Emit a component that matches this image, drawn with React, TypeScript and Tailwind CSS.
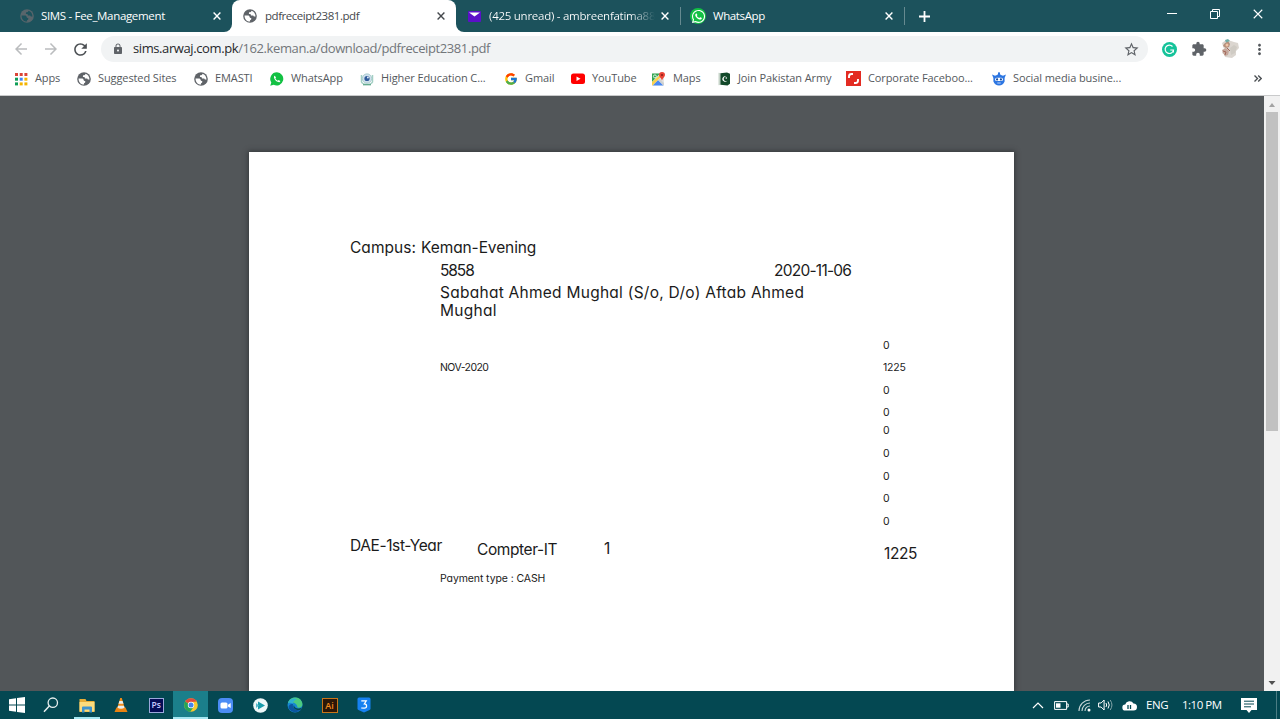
import React from "react";
import { MdLock, MdExtension, MdStarBorder, MdMoreVert, MdRefresh, MdArrowBack, MdArrowForward } from "react-icons/md";
import { FcGoogle } from "react-icons/fc";
import { FaWhatsapp } from "react-icons/fa";

function Globe({ color = "#5f6368", land = "#fff", size = 14 }: { color?: string; land?: string; size?: number }) {
  return (
    <svg width={size} height={size} viewBox="0 0 16 16" className="shrink-0">
      <circle cx="8" cy="8" r="7.8" fill={color} />
      <path d="M1.8 7.3h3.6c1.3 0 2.2.7 2.2 1.8 0 .9.8 1.2 1.8 1.2v1.1c0 .8-.5 1.3-1.3 1.3v1.7C4.600 14.500 1.600 11.600 1.800 7.300z" fill={land} />
      <path d="M9.600 2c0 .9-.5 1.600-1.400 1.600H6.900v1.200c0 .6-.4 1-1 1h1.500c1 0 1.700.6 1.700 1.500h1.800c.8 0 1.500.5 1.500 1.200h1.900C14.200 5.400 12.500 2.800 9.600 2z" fill={land} />
    </svg>
  );
}

function WhatsApp({ size = 14 }: { size?: number }) {
  return (
    <svg width={size} height={size} viewBox="0 0 16 16" className="shrink-0">
      <path d="M8 .3A7.600 7.600 0 0 0 1.500 12L.3 15.800l3.900-1.100A7.600 7.600 0 1 0 8 .3z" fill="#12c143" />
      <path d="M5.600 4.200c-.9.300-1.300 1.200-1 2.300.7 2.400 2.500 4.300 4.900 5 1.100.3 2.100-.2 2.300-1.300l-2-1.100-.9 1c-1.300-.5-2.200-1.400-2.800-2.600l.8-.9z" fill="#fff" />
    </svg>
  );
}

function AppsIcon() {
  const colors = ["#db4437", "#db4437", "#db4437", "#0f9d58", "#4285f4", "#f4b400", "#0f9d58", "#f4b400", "#f4b400"];
  return (
    <svg width="14" height="14" viewBox="0 0 14 14" className="shrink-0">
      {colors.map((c, i) => (
        <rect key={i} x={1 + (i % 3) * 4.700} y={1 + Math.floor(i / 3) * 4.700} width="3" height="3" fill={c} />
      ))}
    </svg>
  );
}

function HigherEd() {
  return (
    <svg width="14" height="14" viewBox="0 0 14 14" className="shrink-0">
      <path d="M1.500 3v7C3 13 11 13 12.500 10V3" fill="none" stroke="#a3cfc4" strokeWidth="1.500" />
      <circle cx="7" cy="6.500" r="4.700" fill="#cfe0ec" stroke="#8fbcba" strokeWidth=".6" />
      <circle cx="7" cy="6.500" r="2.600" fill="#2f5a9a" />
      <circle cx="7.900" cy="5.500" r=".9" fill="#e8f2fb" />
      <path d="M3 12.700h8" stroke="#61a98e" strokeWidth="1.300" />
    </svg>
  );
}

function YouTube() {
  return (
    <svg width="14" height="14" viewBox="0 0 14 14" className="shrink-0">
      <rect x="0" y="1.500" width="14" height="10.500" rx="2.500" fill="#f00" />
      <path d="M5.500 4.500v4.600l4-2.300z" fill="#fff" />
    </svg>
  );
}

function Maps() {
  return (
    <svg width="15" height="14" viewBox="0 0 15 14" className="shrink-0">
      <rect x="1" y="1.500" width="12" height="12" rx="1" fill="#e6e6e3" />
      <path d="M1 1.500h8L1 10z" fill="#34a853" />
      <path d="M1.500 13.500l5.500-5.500 5.500 5.500z" fill="#4a89f3" />
      <path d="M1 10l8-7 1 2-8.500 8.500H1z" fill="#fbd14b" />
      <path d="M7 8l1.500-1.500 4.500 4.500v2.500h-.5z" fill="#cfd1d1" />
      <circle cx="3.900" cy="4.400" r="1.500" fill="none" stroke="#fff" strokeWidth=".8" />
      <path d="M11 0a3 3 0 0 0-3 3c0 2 2.300 2.800 3 5.500.700-2.700 3-3.500 3-5.500a3 3 0 0 0-3-3z" fill="#ea4335" />
      <circle cx="11" cy="3" r="1.100" fill="#8c1f17" />
    </svg>
  );
}

function Army() {
  return (
    <svg width="14" height="14" viewBox="0 0 14 14" className="shrink-0">
      <path d="M1.500.8L4 1.200v11.500l-2.500.500z" fill="#c5d3c8" />
      <path d="M3.500 1.200L10 .5l3 1.300v10L10.500 13.500l-7-.8z" fill="#12492a" />
      <path d="M9.600 4.800a2.700 2.700 0 1 0 .8 3.700 2.200 2.200 0 1 1-.8-3.700z" fill="#fff" />
      <circle cx="9.300" cy="6" r=".8" fill="#fff" />
    </svg>
  );
}

function Corporate() {
  return (
    <svg width="15" height="15" viewBox="0 0 15 15" className="shrink-0">
      <rect width="15" height="15" fill="#e32b22" />
      <path d="M3 7V5.500Q3 3 5.500 3H7M8 12h1.500Q12 12 12 9.500V8" fill="none" stroke="#fff" strokeWidth="1.900" />
    </svg>
  );
}

function Social() {
  return (
    <svg width="14" height="14" viewBox="0 0 14 14" className="shrink-0">
      <path d="M0 2.500l3 1.200L5 3l1-.7V.8L7 0l1 .8v1.500L9 3l2 .7 3-1.200L12.600 6v3.500Q11 13.600 7 13.600T1.400 9.500V6z" fill="#2d76e2" />
      <rect x="3" y="5.700" width="8" height="3.400" rx="1.700" fill="#fff" />
      <circle cx="5.100" cy="7.400" r="1.100" fill="#174b9d" />
      <circle cx="8.900" cy="7.400" r="1.100" fill="#174b9d" />
      <path d="M5.300 11h3.400" stroke="#fff" strokeWidth=".7" />
    </svg>
  );
}

function Cross({ color = "#fff", size = 8, w = 1.400 }: { color?: string; size?: number; w?: number }) {
  return (
    <svg width={size} height={size} viewBox="0 0 8 8" className="shrink-0">
      <path d="M.6.6l6.800 6.800M7.400.6L.6 7.400" stroke={color} strokeWidth={w} />
    </svg>
  );
}

function TabStrip() {
  return (
    <div className="flex h-8 bg-[#1c525c] text-[11.5px] tracking-[-0.33px] text-white">
      <div className="flex bg-white">
        <div className="flex w-[232px] items-center rounded-br-lg bg-[#1c525c] pl-5">
          <Globe color="#58656b" land="#1c525c" />
          <span className="ml-[7px] w-[172px] whitespace-nowrap">SIMS - Fee_Management</span>
          <Cross />
        </div>
      </div>
      <div className="flex w-[224px] items-center rounded-t-lg bg-white pl-[11px] text-[#45494d]">
        <Globe />
        <span className="ml-2 w-[172px] whitespace-nowrap tracking-[-0.46px]">pdfreceipt2381.pdf</span>
        <Cross color="#45494d" />
      </div>
      <div className="flex bg-white">
        <div className="flex w-[224px] items-center rounded-bl-lg bg-[#1c525c] pl-3">
          <svg width="13" height="11" viewBox="0 0 13 11" className="shrink-0">
            <rect width="13" height="11" rx="1" fill="#5b10c8" />
            <path d="M1 1.500h11L6.500 5.500z" fill="#fff" />
          </svg>
          <span className="ml-2 w-[166px] whitespace-nowrap bg-linear-to-r from-white from-85% to-transparent bg-clip-text tracking-[-0.26px] text-transparent">
            (425 unread) - ambreenfatima88
          </span>
          <span className="ml-[6px]"><Cross /></span>
        </div>
      </div>
      <div className="flex w-[224px] items-center">
        <div className="h-[18px] w-px bg-[#668a90]" />
        <span className="ml-[9px] flex h-4 w-4 items-center justify-center rounded-full bg-[#12c143] text-white">
          <FaWhatsapp size={15} />
        </span>
        <span className="ml-[7px] w-[172px] tracking-[-0.4px]">WhatsApp</span>
        <Cross />
      </div>
      <div className="flex grow items-center">
        <div className="h-[18px] w-px bg-[#668a90]" />
        <svg width="11" height="11" viewBox="0 0 11 11" className="ml-[14px]">
          <path d="M5.500 0v11M0 5.500h11" stroke="#fff" strokeWidth="1.800" />
        </svg>
        <div className="mb-[5px] ml-auto flex items-center pr-[17px]">
          <div className="h-px w-2.5 bg-white" />
          <svg width="10" height="10" viewBox="0 0 10 10" className="ml-[33px]">
            <path d="M.5 2.500h7v7h-7zM2.500 2.500v-2h7v7h-2" fill="none" stroke="#fff" />
          </svg>
          <span className="ml-[33px]"><Cross size={10} w={0.900} /></span>
        </div>
      </div>
    </div>
  );
}

function Toolbar() {
  return (
    <div className="flex h-[33px] items-center pt-px text-[#5f6368]">
      <MdArrowBack size={18} className="ml-[12px] text-[#babcbe]" />
      <MdArrowForward size={18} className="ml-[12px] text-[#babcbe]" />
      <MdRefresh size={19} className="ml-[11px] text-[#4c5054]" />
      <div className="ml-[11px] flex h-[26px] w-[1047px] items-center rounded-full bg-[#f1f3f4] pl-[11px] pr-2">
        <MdLock size={12} />
        <span className="ml-[9px] grow text-[13px] tracking-[-0.4px] text-[#72767a]">
          <span className="text-[#26282b]">sims.arwaj.com.pk</span>/162.keman.a/download/pdfreceipt2381.pdf
        </span>
        <MdStarBorder size={17} />
      </div>
      <svg width="15" height="15" viewBox="0 0 15 15" className="ml-[14px]">
        <circle cx="7.500" cy="7.500" r="7.500" fill="#15c39a" />
        <path d="M10.500 4.500A4.200 4.200 0 1 0 11.500 8H8.300M11.400 7.500v3" fill="none" stroke="#fff" strokeWidth="1.200" />
      </svg>
      <MdExtension size={16} className="ml-[14px]" />
      <svg width="19" height="20" viewBox="0 0 19 20" className="ml-[13px]">
        <path d="M2 4l4-3 5 1 3 1 4 1 1 5-3 3v4l-4 3-7-1-1-3-2-1 2-4z" fill="#dbd6d0" />
        <path d="M4 5l4-3 2 3-1 3-3 1-3-2z" fill="#b58e7a" />
        <path d="M5 1l3-1 2 2-4 1.500z" fill="#6fada8" />
        <path d="M2 11l4-2 3 3-1 4-3 1-2-3z" fill="#c6a89c" />
        <path d="M3 12l3 1-1 3M7 9l3 3" stroke="#a3685a" fill="none" />
        <path d="M10 9l4-3 3 2-2 6-4 2z" fill="#cfcbc4" />
        <circle cx="7" cy="6" r="1.500" fill="#efc5a8" />
      </svg>
      <MdMoreVert size={17} className="ml-[12px] text-[#54585c]" />
    </div>
  );
}

function Mark({ width, icon, label }: { width: string; icon: React.ReactNode; label: string }) {
  return (
    <div className={`flex shrink-0 items-center gap-[7px] whitespace-nowrap ${width}`}>
      {icon}
      <span>{label}</span>
    </div>
  );
}

function Bookmarks() {
  return (
    <div className="flex h-[31px] items-center border-b border-[#c9cacb] pb-[3px] pl-[13px] text-[11px] tracking-[-0.1px] text-[#55595d]">
      <Mark width="w-[64px] pl-px" icon={<AppsIcon />} label="Apps" />
      <Mark width="w-[117px]" icon={<Globe />} label="Suggested Sites" />
      <Mark width="w-[76px]" icon={<Globe />} label="EMASTI" />
      <Mark width="w-[90px]" icon={<WhatsApp />} label="WhatsApp" />
      <Mark width="w-[144px]" icon={<HigherEd />} label="Higher Education C..." />
      <Mark width="w-[66px]" icon={<FcGoogle size={14} />} label="Gmail" />
      <Mark width="w-[81px] pl-px" icon={<YouTube />} label="YouTube" />
      <Mark width="w-[66px]" icon={<Maps />} label="Maps" />
      <Mark width="w-[129px]" icon={<Army />} label="Join Pakistan Army" />
      <Mark width="w-[145px]" icon={<Corporate />} label="Corporate Faceboo..." />
      <Mark width="w-[200px] pl-px" icon={<Social />} label="Social media busine..." />
      <svg width="8" height="7" viewBox="0 0 8 7" className="ml-auto mr-[18px]">
        <path d="M.5.5l3 3-3 3M4.200.5l3 3-3 3" fill="none" stroke="#4b4f53" strokeWidth="1.400" />
      </svg>
    </div>
  );
}

function Amount({ gap, month, value }: { gap: string; month?: string; value: string }) {
  return (
    <div className={`flex h-[18px] items-center text-[10.5px] tracking-[-0.2px] text-[#222] ${gap}`}>
      <span className="ml-[191px] w-[443px] tracking-[-0.55px]">{month}</span>
      <span>{value}</span>
    </div>
  );
}

function Receipt() {
  return (
    <div className="h-full w-[765px] bg-white pt-[84px] font-['Inter',sans-serif] text-[15.5px] text-[#1b1b1b] shadow-[0_0_5px_1px_#35383b] [font-feature-settings:'cv11']">
      <div className="flex h-[23px] items-center pl-[101px]">
        <span className="tracking-[0.05px]">Campus:</span>
        <span className="ml-[5px] tracking-[-0.1px]">Keman-Evening</span>
      </div>
      <div className="flex h-[23px] items-center pl-[191px]">
        <span className="w-[334px] tracking-[-1.1px]">5858</span>
        <span className="tracking-[-0.75px]">2020-11-06</span>
      </div>
      <div className="ml-[191px] mt-[2px] w-[400px] leading-[18px] tracking-[0.26px]">
        Sabahat Ahmed Mughal (S/o, D/o) Aftab Ahmed<br />Mughal
      </div>
      <Amount gap="mt-[17px]" value="0" />
      <Amount gap="mt-[4px]" month="NOV-2020" value="1225" />
      <Amount gap="mt-[5px]" value="0" />
      <Amount gap="mt-[4px]" value="0" />
      <Amount gap="mt-0" value="0" />
      <Amount gap="mt-[5px]" value="0" />
      <Amount gap="mt-[5px]" value="0" />
      <Amount gap="mt-[4px]" value="0" />
      <Amount gap="mt-[5px]" value="0" />
      <div className="mt-[5px] flex pl-[101px] leading-[20px] tracking-[-0.4px]">
        <span className="w-[127px]">DAE-1st-Year</span>
        <span className="w-[127px] pt-[4px]">Compter-IT</span>
        <span className="w-[280px] pt-[3px]">1</span>
        <span className="pt-[8px]">1225</span>
      </div>
      <div className="mt-[6px] pl-[191px] text-[10.5px] leading-[18px] tracking-[-0.1px]">Payment type : CASH</div>
    </div>
  );
}

function Viewer() {
  return (
    <div className="flex h-[595px] overflow-hidden bg-[#525659]">
      <div className="flex grow overflow-hidden pl-[249px] pt-[56px]">
        <Receipt />
      </div>
      <div className="flex w-4 flex-col items-center bg-[#f1f1f1]">
        <svg width="8" height="16" viewBox="0 0 8 16"><path d="M1 11l3-4 3 4z" fill="#a3a3a3" /></svg>
        <div className="h-[319px] w-3 bg-[#c1c1c1]" />
        <svg width="8" height="16" viewBox="0 0 8 16" className="mt-auto"><path d="M.5 6l3.500 4 3.500-4z" fill="#505050" /></svg>
      </div>
    </div>
  );
}

function Task({ children, look = "" }: { children: React.ReactNode; look?: string }) {
  return (
    <div className={`flex h-full w-[34.7px] shrink-0 flex-col items-center justify-center ${look}`}>{children}</div>
  );
}

function Taskbar() {
  return (
    <div className="flex h-7 items-center bg-[#044852] text-[11.5px] text-white">
      <Task>
        <svg width="16" height="16" viewBox="0 0 16 16">
          <path d="M0 2.200L7 1.200v6.300H0zM8 1.100L16 0v7.500H8zM0 8.500h7v6.300l-7-1zM8 8.500h8V16l-8-1.100z" fill="#fff" />
        </svg>
      </Task>
      <Task look="pr-[3px]">
        <svg width="16" height="16" viewBox="0 0 16 16">
          <circle cx="9.800" cy="5.700" r="4.700" fill="none" stroke="#e7eeee" strokeWidth="1.300" />
          <path d="M6.300 9L1 14.800" stroke="#e7eeee" strokeWidth="1.500" />
        </svg>
      </Task>
      <Task>
        <div className="flex h-full w-[26px] items-center justify-center border-b-2 border-[#a5e6f2] pt-0.5">
          <svg width="16" height="15" viewBox="0 0 16 15">
            <path d="M.5 1h6l1 2h8v11H.5z" fill="#e7ad37" />
            <path d="M.5 4h15v9.500H.5z" fill="#fcdc7c" />
            <path d="M3 14.500v-5q0-1 1-1h8q1 0 1 1v5h-2.500v-3h-5v3z" fill="#3e93cd" />
          </svg>
        </div>
      </Task>
      <Task>
        <svg width="14" height="16" viewBox="0 0 14 16">
          <path d="M2.500 10.500h9l2 4.500H.5z" fill="#e98211" />
          <path d="M6.200 1h1.600L11 12H3z" fill="#f28b18" />
          <path d="M5.400 4h3.200l.9 2.700h-5zM4 8.800h6l.5 2q-3.500 1.700-7 0z" fill="#e8eeee" />
        </svg>
      </Task>
      <Task>
        <div className="flex h-[15px] w-[15px] items-center justify-center border border-[#9ba7db] bg-[#050c56] text-[8.5px] font-semibold leading-none text-[#c5caff]">Ps</div>
      </Task>
      <Task look="border-b-2 border-[#a5e6f2] bg-[#1b7f8b] pt-0.5">
        <svg width="14" height="14" viewBox="0 0 14 14">
          <circle cx="7" cy="7" r="6.800" fill="#f7c92f" />
          <path d="M7 7L1.100 3.600A6.800 6.800 0 0 1 12.900 3.600L7 4z" fill="#df4b3f" />
          <path d="M1.100 3.600A6.800 6.800 0 0 0 6.300 13.800L9.500 9z" fill="#26a457" />
          <circle cx="7" cy="7" r="3.200" fill="#fff" />
          <circle cx="7" cy="7" r="2.500" fill="#4385ef" />
        </svg>
      </Task>
      <Task>
        <svg width="15" height="15" viewBox="0 0 15 15">
          <rect width="15" height="15" rx="4" fill="#4b8cf5" />
          <rect x="2.500" y="4.500" width="7" height="6" rx="1.500" fill="#fff" />
          <path d="M10 6.700l2.700-1.700v5L10 8.500z" fill="#fff" />
        </svg>
      </Task>
      <Task>
        <svg width="15" height="15" viewBox="0 0 15 15">
          <circle cx="7.500" cy="7.500" r="7.300" fill="#edf7f8" />
          <path d="M5 3.500l7 4-7 4z" fill="#189baa" />
          <path d="M3 5v5l3-2.500z" fill="#56b8cb" />
        </svg>
      </Task>
      <Task>
        <svg width="16" height="16" viewBox="0 0 16 16">
          <circle cx="8" cy="8" r="7.500" fill="#1788d1" />
          <path d="M1 6C2 1.500 6 .3 9 .6c4 .4 6.800 4 6.400 7.400-.3 2-2.500 3-5 2.500 0-4-5-6.500-9.400-4.500z" fill="#4bcb80" />
          <path d="M1 6C3 1 8 .5 10 2.500c-2 0-4 2-4 4C4 5.500 2 5.500 1 6z" fill="#2eb2d0" />
          <path d="M6 7c-1 4 2.500 7 7.500 6C9 17 2 14.500 1.500 10 2 7.500 4 6.500 6 7z" fill="#0b559f" />
          <path d="M7 8c0 3 4 4.500 8 2.500-.4 1-1 1.800-1.500 2.200C9 14 5 11 7 8z" fill="#044852" />
        </svg>
      </Task>
      <Task>
        <div className="flex h-[15px] w-[16px] items-center justify-center border border-[#c87519] bg-[#2b1708] text-[9px] font-semibold leading-none text-[#f28b1c]">Ai</div>
      </Task>
      <Task>
        <svg width="14" height="16" viewBox="0 0 14 16">
          <path d="M2 .5h10q1.500 0 1.500 1.500v9.500q0 1-1 1.500L7 15.600 1.500 13q-1-.5-1-1.500V2Q.5.500 2 .5z" fill="#1681f1" />
          <path d="M4.300 3.800h5L7.300 6.900q2.300 0 2.300 2.100T7.200 11.200L4.200 11" fill="none" stroke="#fff" strokeWidth="1.200" />
        </svg>
      </Task>
      <div className="ml-auto flex items-center">
        <svg width="12" height="7" viewBox="0 0 12 7"><path d="M1 6l5-5 5 5" fill="none" stroke="#fff" strokeWidth="1.200" /></svg>
        <svg width="15" height="9" viewBox="0 0 15 9" className="ml-[10px]">
          <path d="M.6.6h12v7.800H.6zM12.600 3h1.600v3h-1.600" fill="none" stroke="#fff" />
          <path d="M2 2.300h4.500v4.400H2z" fill="#fff" />
        </svg>
        <svg width="13" height="13" viewBox="0 0 13 13" className="ml-[9px]">
          <path d="M1 12A11 11 0 0 1 12 1M4 12A8 8 0 0 1 12 4M7 12a5 5 0 0 1 5-5" fill="none" stroke="#c6d5d7" strokeWidth="1.100" />
          <circle cx="11" cy="11" r="1.500" fill="#fff" />
        </svg>
        <svg width="16" height="14" viewBox="0 0 16 14" className="ml-[7px]">
          <path d="M.6 5h2.500l3-3v10l-3-3H.6z" fill="none" stroke="#fff" />
          <path d="M8 5q1.300 2 0 4M10 3.500q2.500 3.500 0 7" fill="none" stroke="#fff" />
          <path d="M12.200 2q3.500 5 0 10" fill="none" stroke="#83a5a9" />
        </svg>
        <svg width="15" height="11" viewBox="0 0 15 11" className="ml-[8px]">
          <path d="M3.500 10.500a3 3 0 0 1-.3-6A4.500 4.500 0 0 1 11.500 3.500a3.500 3.500 0 0 1 0 7z" fill="#fff" />
          <path d="M6 5v4M8.500 5v4" stroke="#044852" strokeWidth="1.300" />
        </svg>
        <span className="ml-[9px] w-[36px] tracking-[-0.4px]">ENG</span>
        <span className="w-[59px] whitespace-nowrap tracking-[-0.5px]">1:10 PM</span>
        <svg width="16" height="15" viewBox="0 0 16 15">
          <path d="M0 0h16v12h-5.500L8 15l-2.500-3H0z" fill="#fff" />
          <path d="M3 3.200h10M3 6h10M3 8.800h7" stroke="#044852" />
        </svg>
        <div className="ml-[19px] mr-[3px] h-7 w-px bg-[#4b7d84]" />
      </div>
    </div>
  );
}

export default function App() {
  return (
    <div className="flex h-[719px] w-[1280px] flex-col overflow-hidden bg-white font-['Open_Sans',sans-serif]">
      <TabStrip />
      <Toolbar />
      <Bookmarks />
      <Viewer />
      <Taskbar />
    </div>
  );
}
